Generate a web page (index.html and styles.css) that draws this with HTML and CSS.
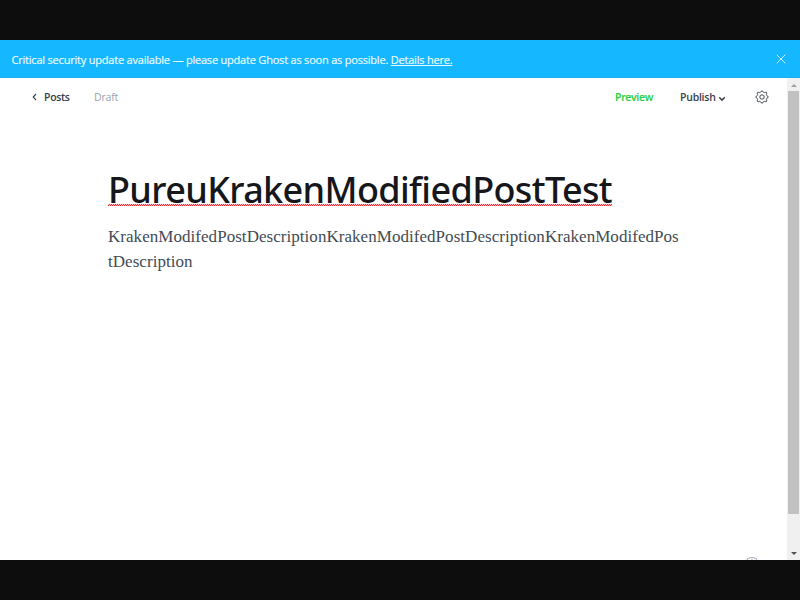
FILE: index.html
```
<!DOCTYPE html>
<html lang="en">
<head>
<meta charset="utf-8">
<title>Editor - Ghost</title>
<link rel="stylesheet" href="styles.css">
</head>
<body>
<div class="app">
  <div class="alert">
    <p class="alert-text">Critical security update available — please update Ghost as soon as possible. <a class="alert-link">Details here.</a></p>
    <svg class="close" width="10" height="10" viewBox="0 0 10 10"><path d="M.7.7l8.6 8.6M9.3.7L.7 9.3"/></svg>
  </div>
  <div class="workspace">
    <main class="editor">
      <header class="toolbar">
        <svg class="back" width="5" height="8" viewBox="0 0 5 8"><path d="M4 1L1.2 4 4 7"/></svg>
        <span class="posts">Posts</span>
        <span class="draft">Draft</span>
        <span class="preview">Preview</span>
        <span class="publish">Publish</span>
        <svg class="chevron" width="8" height="6" viewBox="0 0 8 6"><path d="M1.2 1.3L4 4.1l2.8-2.8"/></svg>
        <svg class="gear" width="14" height="14" viewBox="0 0 14 14"><path d="M5.7 2.1Q7-.9 8.3 2.1L9.5 2.6Q12.6 1.4 11.4 4.5L11.9 5.7Q14.9 7 11.9 8.3L11.4 9.5Q12.6 12.6 9.5 11.4L8.3 11.9Q7 14.9 5.7 11.9L4.5 11.4Q1.4 12.6 2.6 9.5L2.1 8.3Q-.9 7 2.1 5.7L2.6 4.5Q1.4 1.4 4.5 2.6Z"/><circle cx="7" cy="7" r="2.2"/></svg>
      </header>
      <article class="post">
        <h1 class="title"><span class="misspelled">PureuKrakenModifiedPostTest</span></h1>
        <p class="body">KrakenModifedPostDescriptionKrakenModifedPostDescriptionKrakenModifedPostDescription</p>
      </article>
      <svg class="help" width="12" height="12" viewBox="0 0 12 12"><rect x=".7" y=".7" width="10.6" height="10.6" rx="3.6"/><path d="M4.3 3.8Q6 1.8 7.7 3.8"/></svg>
    </main>
    <div class="scrollbar">
      <svg class="arrow up" width="6" height="3" viewBox="0 0 6 3"><path d="M3 0l3 3H0z"/></svg>
      <div class="thumb"></div>
      <svg class="arrow down" width="6" height="3" viewBox="0 0 6 3"><path d="M0 0h6L3 3z"/></svg>
    </div>
  </div>
</div>
</body>
</html>
```
FILE: styles.css
```
* { box-sizing: border-box; }
body { margin: 0; background: #0d0d0d; font-family: "Open Sans", "Noto Sans", sans-serif; }
svg { fill: none; flex: none; }
.app { height: 520px; margin: 40px 0; overflow: hidden; background: #fff; display: flex; flex-direction: column; }
.alert { height: 38px; flex: none; padding: 0 14px 0 11px; display: flex; align-items: center; justify-content: space-between; background: #15b7ff; border-bottom: 1px solid #19aef2; color: #e8f8ff; }
.alert-text { margin: 0; font-size: 11px; line-height: 16px; letter-spacing: -.205px; -webkit-text-stroke: .2px; white-space: nowrap; padding: 2px 0 0 .5px; }
.alert-link { text-decoration: underline; }
.close { stroke: #d3f2ff; stroke-width: 1; }
.workspace { flex: 1; min-height: 0; display: flex; }
.editor { flex: 1; position: relative; overflow: hidden; }
.toolbar { height: 38px; padding: 0 18px 0 32px; display: flex; align-items: center; font-size: 10.5px; font-weight: 600; letter-spacing: -.32px; color: #394047; }
.back { stroke: #394047; stroke-width: 1.1; margin-right: 7px; }
.posts { width: 50px; }
.draft { font-weight: 400; color: #98a3af; letter-spacing: -.2px; }
.preview { margin: 0 -1px 0 auto; width: 66px; color: #30cf43; -webkit-text-stroke: .15px; }
.publish { width: 37px; letter-spacing: -.25px; }
.chevron { stroke: #394047; stroke-width: 1.5; margin: 3px 29px 0 1px; }
.gear { stroke: #394047; stroke-width: .95; }
.post { margin: 50px 100px 0 108px; }
.title { margin: 0; height: 48px; font-family: "Noto Sans", sans-serif; font-size: 36px; line-height: 48px; font-weight: 500; letter-spacing: -.63px; color: #15171a; }
.misspelled { display: inline-block; position: relative; white-space: nowrap; }
.misspelled::after { content: ""; position: absolute; left: 0; right: 0; top: 38px; height: 2px; background: conic-gradient(#ff2630 25%, #ffb9bc 0 50%, #ff2630 0 75%, #ffb9bc 0) 0 0 / 2px 2px; }
.body { margin: 10px 0 0; font-family: "Liberation Serif", serif; font-size: 17px; letter-spacing: .045px; line-height: 25px; color: #434b54; word-break: break-all; padding-right: 8px; }
.help { position: absolute; left: 746px; top: 479px; stroke: #9aa5b1; stroke-width: 1; }
.scrollbar { width: 13px; flex: none; background: #f0f0f0; display: flex; flex-direction: column; align-items: center; padding: 6px 0 5px; }
.arrow.up { fill: #a0a0a0; }
.arrow.down { fill: #505050; margin-top: auto; }
.thumb { width: 11px; height: 423px; margin-top: 4px; background: #c1c1c1; }
```
